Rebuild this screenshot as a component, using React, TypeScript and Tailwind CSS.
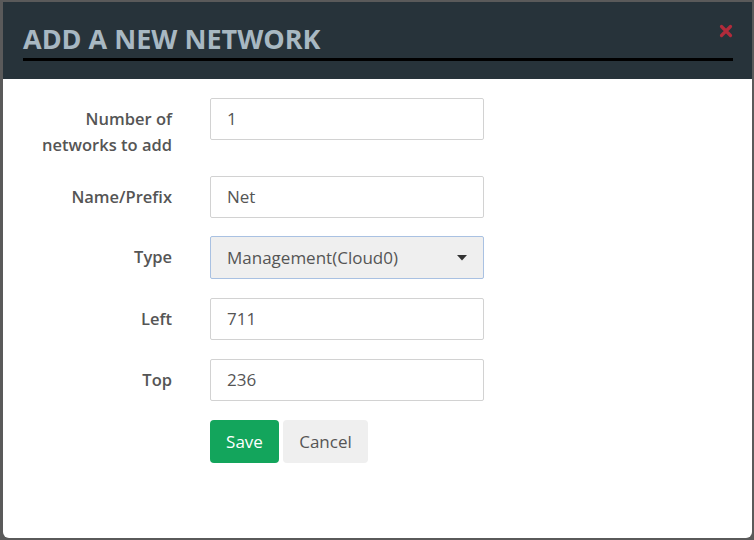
import React from "react";

const font = { fontFamily: '"Open Sans", "Noto Sans", "DejaVu Sans", sans-serif' };

function Row({ label, children, className }: { label: React.ReactNode; children: React.ReactNode; className?: string }) {
  return (
    <div className={"flex items-start " + (className ?? "")}>
      <div className="w-[169px] shrink-0 text-right text-[16.5px] font-semibold text-[#555555] leading-[26px] pt-[8px]">
        {label}
      </div>
      <div className="ml-[38px] w-[274px]">{children}</div>
    </div>
  );
}

function Input({ value }: { value: string }) {
  return (
    <div className="h-[42px] w-full border border-[#d2d2d2] rounded-[2px] bg-white flex items-center pl-[16px] text-[17px] text-[#555555]">
      {value}
    </div>
  );
}

export default function App() {
  return (
    <div className="w-[754px] h-[540px] bg-[#5a5a5a] pt-[2px] pl-[3px] pr-[2px] pb-[2px]" style={font}>
      <div className="w-[749px] h-[536px] bg-white rounded-b-[6px] overflow-hidden flex flex-col">
        <div className="h-[77px] bg-[#27333a] relative pl-[20px] pr-[19px] pt-[20px]">
          <div className="text-[27px] font-bold leading-[34px] text-[#a8b8c2]">ADD A NEW NETWORK</div>
          <div className="mt-[2px] h-[3px] bg-black"></div>
          <svg className="absolute left-[716px] top-[22px]" width="14" height="14" viewBox="0 0 14 14">
            <path d="M2.5 2.5 L11.5 11.5 M11.5 2.5 L2.5 11.5" stroke="#b22b3b" strokeWidth="3.2" strokeLinecap="round" />
          </svg>
        </div>
        <div className="pt-[19px] flex flex-col">
          <Row label={<><div>Number of</div><div>networks to add</div></>} className="h-[78px]">
            <Input value="1" />
          </Row>
          <Row label="Name/Prefix" className="h-[60px]">
            <Input value="Net" />
          </Row>
          <Row label="Type" className="h-[62px]">
            <div className="h-[43px] w-full border border-[#a9c1e2] rounded-[2px] bg-[#efefef] flex items-center pl-[16px] pr-[16px] text-[17px] text-[#555555]">
              <span className="flex-1">Management(Cloud0)</span>
              <svg width="10" height="6" viewBox="0 0 10 6">
                <path d="M0 0 L10 0 L5 5.5 Z" fill="#333333" />
              </svg>
            </div>
          </Row>
          <Row label="Left" className="h-[61px]">
            <Input value="711" />
          </Row>
          <Row label="Top" className="h-[61px]">
            <Input value="236" />
          </Row>
          <div className="flex pl-[207px] gap-[4px]">
            <div className="h-[43px] w-[69px] rounded-[4px] bg-[#13a55c] text-white text-[17px] flex items-center justify-center">Save</div>
            <div className="h-[43px] w-[85px] rounded-[4px] bg-[#efefef] text-[#555555] text-[17px] flex items-center justify-center">Cancel</div>
          </div>
        </div>
      </div>
    </div>
  );
}
